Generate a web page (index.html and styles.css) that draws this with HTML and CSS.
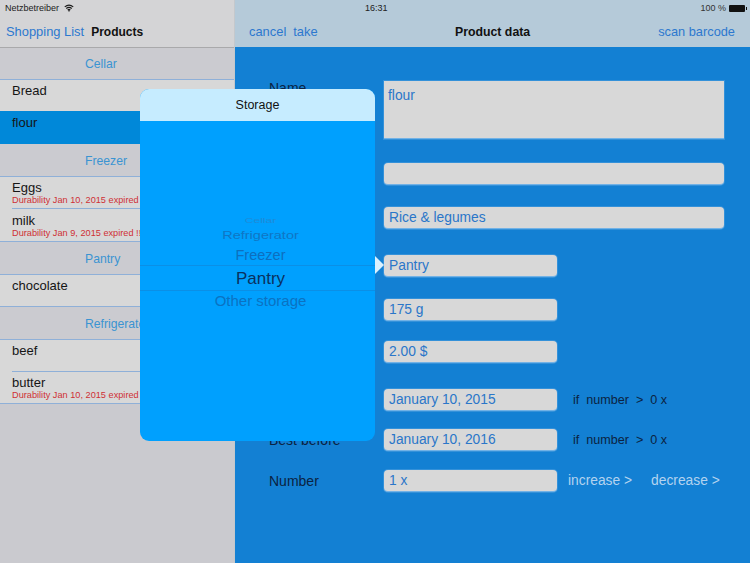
FILE: index.html
```html
<!DOCTYPE html>
<html lang="en">
<head>
<meta charset="utf-8">
<title>Product data</title>
<link rel="stylesheet" href="styles.css">
</head>
<body>
<div class="app">
  <aside class="side">
    <header class="side-top">
      <div class="status">
        <span>Netzbetreiber</span>
        <svg class="wifi" viewBox="0 0 12 9" width="10" height="8"><path d="M.9 3.2C4 .5 8 .5 11.1 3.2M2.7 5.1C4.8 3.4 7.2 3.4 9.3 5.1M4.4 6.9C5.4 6.1 6.6 6.1 7.6 6.9" fill="none" stroke="#1c1c1c" stroke-width="1.4"/><path d="M6 9 4.7 7.7C5.4 7.1 6.6 7.1 7.3 7.7Z" fill="#1c1c1c"/></svg>
      </div>
      <nav class="side-nav">
        <span class="link">Shopping List</span>
        <strong class="title">Products</strong>
      </nav>
    </header>
    <div class="section section-first">Cellar</div>
    <div class="item inset item-small"><span class="name">Bread</span></div>
    <div class="item selected"><span class="name">flour</span></div>
    <div class="section">Freezer</div>
    <div class="item inset"><span class="name">Eggs</span><span class="warn">Durability Jan 10, 2015 expired !!</span></div>
    <div class="item item-tall"><span class="name">milk</span><span class="warn">Durability Jan 9, 2015 expired !!</span></div>
    <div class="section">Pantry</div>
    <div class="item"><span class="name">chocolate</span></div>
    <div class="section">Refrigerator</div>
    <div class="item inset"><span class="name">beef</span></div>
    <div class="item"><span class="name">butter</span><span class="warn">Durability Jan 10, 2015 expired !!</span></div>
  </aside>

  <main class="detail">
    <header class="detail-top">
      <div class="status status-main">
        <span class="time">16:31</span>
        <span class="batt-wrap">100 % <span class="batt"></span></span>
      </div>
      <nav class="detail-nav">
        <span class="nav-left"><span class="link">cancel</span><span class="link">take</span></span>
        <strong class="title title-main">Product data</strong>
        <span class="link link-scan">scan barcode</span>
      </nav>
    </header>
    <div class="form">
      <div class="row"><span class="label label-name">Name</span><div class="field area wide">flour</div></div>
      <div class="row"><span class="label"></span><div class="field wide"></div></div>
      <div class="row"><span class="label"></span><div class="field wide">Rice &amp; legumes</div></div>
      <div class="row"><span class="label"></span><div class="field short">Pantry</div></div>
      <div class="row"><span class="label"></span><div class="field short">175 g</div></div>
      <div class="row"><span class="label"></span><div class="field short">2.00 $</div></div>
      <div class="row"><span class="label"></span><div class="field short">January 10, 2015</div><span class="cond">if&nbsp; number&nbsp; &gt;&nbsp; 0 x</span></div>
      <div class="row"><span class="label">Best before</span><div class="field short">January 10, 2016</div><span class="cond">if&nbsp; number&nbsp; &gt;&nbsp; 0 x</span></div>
      <div class="row"><span class="label">Number</span><div class="field short">1 x</div><span class="step">increase &gt;</span><span class="step step-dec">decrease &gt;</span></div>
    </div>
  </main>

  <div class="popover">
    <div class="pop-head">Storage</div>
    <div class="picker">
      <div class="opt opt-cellar">Cellar</div>
      <div class="opt opt-fridge">Refrigerator</div>
      <div class="opt opt-freezer">Freezer</div>
      <div class="opt opt-current">Pantry</div>
      <div class="opt opt-other">Other storage</div>
    </div>
    <span class="arrow"></span>
  </div>
</div>
</body>
</html>
```
FILE: styles.css
```css
* { box-sizing: border-box; }
html, body { margin: 0; height: 100%; }
body { font-family: "Liberation Sans", Arial, sans-serif; overflow: hidden; }

.app {
  position: relative;
  display: flex;
  width: 750px;
  height: 563px;
  overflow: hidden;
}

/* sidebar */
.side {
  width: 235px;
  flex: none;
  background: #cacacf;
  border-right: 1px solid #c4c8cc;
}
.side-top {
  height: 47px;
  background: #d4d4d6;
}
.status {
  height: 16px;
  display: flex;
  align-items: center;
  gap: 5px;
  padding-left: 5px;
  font-size: 9px;
  color: #222;
}
.side-nav {
  display: flex;
  align-items: center;
  gap: 7px;
  height: 31px;
  padding-left: 6px;
  font-size: 12.9px;
}
.link { color: #2c78cf; }
.title { color: #111; font-weight: 700; font-size: 12px; }
.title-main { font-size: 12.3px; flex: 1; }
.link-scan { font-size: 12.8px; }

.section {
  height: 33px;
  padding: 10px 0 0 85px;
  font-size: 12.2px;
  color: #3a94d2;
  background: #cbcbd0;
  border-bottom: 1px solid #8fb0d8;
  white-space: nowrap;
}
.section-first {
  padding-top: 9px;
  border-top: 1px solid #a9a9ab;
}
.item {
  position: relative;
  height: 32px;
  background: #d8d8d8;
  border-bottom: 1px solid #8fb0d8;
  padding: 3px 0 0 12px;
  white-space: nowrap;
}
.item-small { height: 31px; }
.item-tall { height: 33px; padding-top: 4px; }
.item.inset { border-bottom-color: #d8d8d8; }
.item.inset::after {
  content: "";
  position: absolute;
  left: 12px;
  right: 0;
  bottom: -1px;
  height: 1px;
  background: #8fb0d8;
}
.item.item-small::after { display: none; }
.item.selected {
  background: #0088d9;
  border-bottom-color: #0088d9;
  height: 33px;
  padding-top: 4px;
}
.name { display: block; font-size: 13px; line-height: 15px; color: #151515; }
.warn { display: block; font-size: 9.2px; line-height: 11px; color: #cf2f35; }

/* detail */
.detail {
  flex: 1;
  display: flex;
  flex-direction: column;
  background: #1380d3;
}
.detail-top {
  height: 47px;
  background: #b5cad9;
}
.status-main {
  position: relative;
  justify-content: flex-end;
  padding-right: 5px;
}
.time {
  position: absolute;
  left: 130px;
  top: 3px;
}
.batt-wrap { display: flex; align-items: center; gap: 3px; color: #333; }
.batt {
  width: 16px;
  height: 7px;
  border-radius: 1px;
  background: #111;
  position: relative;
}
.batt::after {
  content: "";
  position: absolute;
  right: -2px;
  top: 2px;
  width: 1px;
  height: 3px;
  background: #111;
}
.detail-nav {
  height: 31px;
  display: flex;
  align-items: center;
  padding: 0 15px 0 14px;
  font-size: 12.9px;
}
.nav-left { display: flex; gap: 7px; width: 206px; }

.form {
  flex: 1;
  display: grid;
  grid-template-rows: 82px 44px 48px 44px 42px 48px 40px 41px 22px;
  align-content: start;
  padding: 34px 0 0 34px;
}
.row {
  display: flex;
  align-items: flex-start;
}
.label {
  width: 115px;
  flex: none;
  font-size: 14px;
  line-height: 22px;
  color: #0b2342;
}
.label-name { line-height: 14px; }
.field {
  height: 22px;
  border-radius: 4px;
  background: #d8d8d8;
  border: 1px solid #72b2e6;
  border-width: 0 0 1px;
  box-shadow: 0 0 0 1px rgba(114, 178, 230, 0.35);
  color: #2a76c9;
  font-size: 13.8px;
  line-height: 22px;
  padding-left: 5px;
}
.wide { width: 340px; }
.short { width: 173px; }
.area {
  height: 58px;
  border-radius: 0;
  padding: 7px 0 0 4px;
  line-height: 16px;
}
.cond {
  margin-left: 16px;
  font-size: 12.6px;
  line-height: 22px;
  color: #0b2342;
}
.step {
  margin-left: 11px;
  font-size: 13.8px;
  line-height: 21px;
  color: #b4d3ef;
}
.step-dec { margin-left: 19px; }

/* popover */
.popover {
  position: absolute;
  left: 140px;
  top: 89px;
  width: 235px;
  height: 352px;
  border-radius: 9px;
  background: #00a0fe;
}
.pop-head {
  height: 32px;
  border-radius: 9px 9px 0 0;
  background: #c6ecff;
  color: #111;
  font-size: 12.5px;
  line-height: 33px;
  text-align: center;
}
.picker {
  margin-top: 95px;
  text-align: center;
  padding-left: 6px;
  white-space: nowrap;
}
.opt-cellar {
  height: 10px;
  font-size: 12px;
  line-height: 10px;
  color: #1f8ad6;
  transform: scaleY(0.55);
}
.opt-fridge {
  height: 18px;
  font-size: 14.5px;
  line-height: 18px;
  color: #0f76c4;
  transform: scaleY(0.75);
}
.opt-freezer {
  height: 21px;
  font-size: 14.5px;
  line-height: 22px;
  color: #0d6fbe;
}
.opt-current {
  height: 26px;
  margin-left: -6px;
  padding-left: 6px;
  font-size: 17px;
  line-height: 25px;
  color: #0a3160;
  border-top: 1px solid #0b8fe6;
  border-bottom: 1px solid #0b8fe6;
}
.opt-other {
  height: 22px;
  font-size: 15px;
  line-height: 20px;
  color: #0b72c2;
}
.arrow {
  position: absolute;
  left: 235px;
  top: 167px;
  width: 0;
  height: 0;
  border-style: solid;
  border-width: 9px 0 9px 9px;
  border-color: transparent transparent transparent #d9f1ff;
}
```
